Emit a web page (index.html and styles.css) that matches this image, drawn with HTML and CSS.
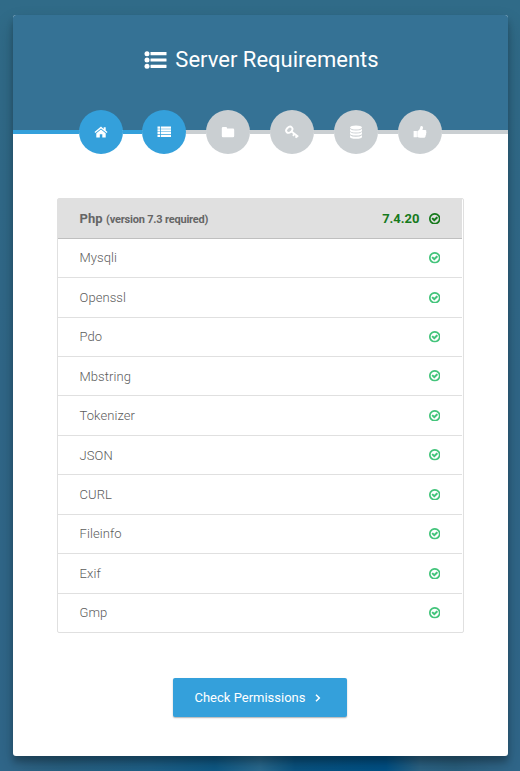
FILE: index.html
```html
<!DOCTYPE html>
<html lang="en">
<head>
<meta charset="utf-8">
<title>Server Requirements</title>
<link rel="stylesheet" href="styles.css">
</head>
<body>
<svg class="sprite" aria-hidden="true">
  <symbol id="check" viewBox="128 128 1536 1536"><path d="M1299 813l-422 422q-19 19-45 19t-45-19l-294-294q-19-19-19-45t19-45l102-102q19-19 45-19t45 19l147 147 275-275q19-19 45-19t45 19l102 102q19 19 19 45t-19 45zm141 83q0-148-73-273t-198-198-273-73-273 73-198 198-73 273 73 273 198 198 273 73 273-73 198-198 73-273zm224 0q0 209-103 385.500t-279.500 279.500-385.500 103-385.500-103-279.500-279.500-103-385.500 103-385.500 279.500-279.500 385.500-103 385.500 103 279.500 279.500 103 385.500z"/></symbol>
</svg>
<main class="card">
  <header class="header">
    <h1 class="title">
      <svg class="title-icon" viewBox="0 0 22 18"><circle cx="2.500" cy="2.700" r="2.500"/><circle cx="2.500" cy="9" r="2.500"/><circle cx="2.500" cy="15.300" r="2.500"/><rect x="6" y="1.100" width="16" height="3.200" rx=".4"/><rect x="6" y="7.400" width="16" height="3.200" rx=".4"/><rect x="6" y="13.700" width="16" height="3.200" rx=".4"/></svg>
      <span>Server Requirements</span>
    </h1>
  </header>
  <nav class="steps">
    <i class="line done"></i>
    <a class="step done"><svg viewBox="0 0 14 14"><path d="M.5 7.100L7 1.600l2.700 2.300V2.300h2v3.300l1.800 1.500-.8 1L7 3.400 1.300 8.100zM2.300 8.300L7 4.400l4.700 3.900v4.300H8.300V9.200H5.800v3.400H2.300z"/></svg></a>
    <i class="line done"></i>
    <a class="step done"><svg viewBox="0 0 14 14"><path d="M.5 1.500H3v2.200H.5zM.5 4.300H3v2.200H.5zM.5 7.100H3v2.200H.5zM.5 9.900H3v2.200H.5zM3.800 1.500H14v2.200H3.800zM3.800 4.300H14v2.200H3.800zM3.800 7.100H14v2.200H3.800zM3.800 9.900H14v2.200H3.800z"/></svg></a>
    <i class="line"></i>
    <a class="step"><svg viewBox="0 0 14 14"><path d="M2 2h3q1 0 1 1v.5h6q1.200 0 1.200 1.200V11q0 1.200-1.200 1.200H2Q.8 12.200.8 11V3.200Q.8 2 2 2z"/></svg></a>
    <i class="line"></i>
    <a class="step"><svg viewBox="0 0 14 14"><g fill="none" stroke="currentColor" stroke-width="1.900"><ellipse cx="4.300" cy="4.800" rx="3.500" ry="2.600" transform="rotate(-45 4.300 4.800)"/><path d="M6.200 6.300l7 5.400M9.500 8.700l-1.500 2.200M12 10.500l-1.300 2.200"/></g></svg></a>
    <i class="line"></i>
    <a class="step"><svg viewBox="0 0 14 14"><ellipse cx="7" cy="2.500" rx="6" ry="2.100"/><path d="M1 3.900q2 1.500 6 1.500t6-1.500v1.500q0 2-6 2t-6-2zM1 7.100q2 1.500 6 1.500t6-1.500v1.500q0 2-6 2t-6-2zM1 10.300q2 1.500 6 1.500t6-1.500v1.500q0 2-6 2t-6-2z"/></svg></a>
    <i class="line"></i>
    <a class="step"><svg viewBox="0 0 14 14"><path d="M.6 6h3.300v6.200H.6zM4.300 6.200C6 5.600 7.200 3.800 7.400 1.600 8 .4 9.900.7 10 2.500c0 1-.3 1.700-.6 2.400h2.800c1.300 0 1.500 1.200.9 1.900.5.700.4 1.400-.1 1.900.3.700.1 1.300-.4 1.700.1 1.700-.7 2.300-2.100 2.300-2.400 0-4.300-.2-6.200-.8z"/></svg></a>
    <i class="line"></i>
  </nav>
  <section class="content">
    <ul class="list">
      <li class="row head"><span>Php <small>(version 7.3 required)</small></span><span class="version">7.4.20 <svg class="check"><use href="#check"/></svg></span></li>
      <li class="row">Mysqli <svg class="check"><use href="#check"/></svg></li>
      <li class="row">Openssl <svg class="check"><use href="#check"/></svg></li>
      <li class="row">Pdo <svg class="check"><use href="#check"/></svg></li>
      <li class="row">Mbstring <svg class="check"><use href="#check"/></svg></li>
      <li class="row">Tokenizer <svg class="check"><use href="#check"/></svg></li>
      <li class="row">JSON <svg class="check"><use href="#check"/></svg></li>
      <li class="row">CURL <svg class="check"><use href="#check"/></svg></li>
      <li class="row">Fileinfo <svg class="check"><use href="#check"/></svg></li>
      <li class="row">Exif <svg class="check"><use href="#check"/></svg></li>
      <li class="row">Gmp <svg class="check"><use href="#check"/></svg></li>
    </ul>
    <a class="button">Check Permissions <svg class="arrow" viewBox="0 0 6 8"><path d="M1 .8L4.300 4 1 7.200"/></svg></a>
  </section>
</main>
</body>
</html>
```
FILE: styles.css
```css
* { box-sizing: border-box; }
body {
  margin: 0;
  height: 771px;
  padding: 15px 12px 15px 13px;
  overflow: hidden;
  font-family: Roboto, sans-serif;
  font-size: 13px;
  background:
    linear-gradient(90deg, transparent 20px, #2a6486 60px, #1f638c 150px, #0f5c8a 215px, #2b6d93 260px, #0a5685 295px, #00538a 385px, #2d6688 420px, #2b6282 455px, transparent 490px) 0 100% / 100% 20px no-repeat,
    linear-gradient(#306b88, #306788 50%, #30678a);
}
.sprite { display: none; }
.card {
  height: 741px;
  border-radius: 3px;
  background: #fff;
  box-shadow: 0 10px 20px rgba(0, 0, 0, .19), 0 6px 6px rgba(0, 0, 0, .23);
}
.header {
  height: 115px;
  padding-top: 30px;
  border-radius: 3px 3px 0 0;
  background: #357295;
}
.title {
  display: flex;
  align-items: center;
  justify-content: center;
  gap: 8px;
  height: 29px;
  margin: 0;
  padding-left: 2px;
  color: #fff;
  font-size: 22px;
  font-weight: 400;
}
.title-icon { width: 23px; height: 18px; fill: currentColor; }
.steps {
  display: flex;
  align-items: center;
  height: 44px;
  margin-top: -20px;
}
.line { flex: 0 0 20px; height: 4px; background: #cacfd2; }
.line:first-child { flex-basis: 66px; }
.line:nth-child(3) { flex-basis: 19px; }
.line:last-child { flex: 1; }
.step {
  display: flex;
  align-items: center;
  justify-content: center;
  flex: 0 0 44px;
  height: 44px;
  border-radius: 50%;
  color: #fff;
  background: #cacfd2;
}
.done { background: #34a0db; }
.step svg { width: 14px; height: 14px; fill: currentColor; }
.content {
  display: flex;
  flex-direction: column;
  align-items: center;
  padding-top: 44px;
}
.list {
  width: 407px;
  height: 435px;
  display: grid;
  grid-template-rows: 39.700px repeat(9, 39.450px) 1fr;
  margin: 0;
  padding: 0 1px 0 0;
  border: 1px solid #e0e0e0;
  border-radius: 2px;
  list-style: none;
}
.row {
  display: flex;
  align-items: center;
  justify-content: space-between;
  padding: 0 22px 0 21.500px;
  border-bottom: 1px solid #e0e0e0;
  color: #5c5c5c;
  font-weight: 300;
  letter-spacing: .08px;
}
.row:last-child { border-bottom: 0; }
.head {
  border-bottom-color: #bfbfbf;
  background: #e0e0e0;
  color: #666;
  font-weight: 700;
}
.head small { font-size: 11px; letter-spacing: -.2px; }
.version { display: flex; align-items: center; gap: 9px; color: #177a1c; letter-spacing: 0; }
.check { width: 11.500px; height: 11.500px; fill: #43c47b; }
.version .check { fill: #177a1c; }
.button {
  display: flex;
  align-items: center;
  gap: 9px;
  width: 174px;
  height: 39px;
  margin: 45px 1px 0 0;
  padding-left: 21.500px;
  border-radius: 2px;
  color: #fff;
  background: #34a0db;
  box-shadow: 0 1px 1.500px rgba(0, 0, 0, .3);
}
.arrow { width: 6px; height: 8px; fill: none; stroke: currentColor; stroke-width: 1.500; }
```
